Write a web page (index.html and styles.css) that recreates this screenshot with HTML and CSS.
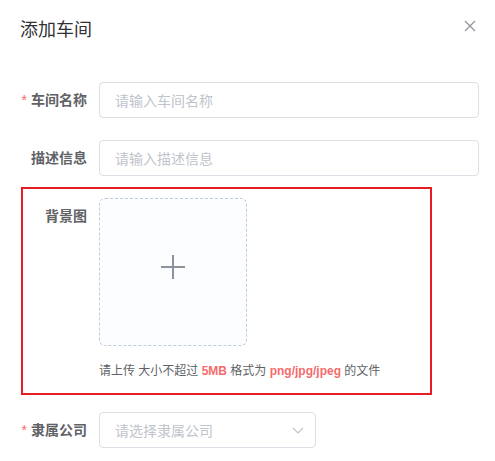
FILE: index.html
```html
<!DOCTYPE html>
<html lang="zh">
<head>
<meta charset="utf-8">
<link rel="stylesheet" href="styles.css">
</head>
<body>
<div class="dialog">
  <div class="header">
    <span class="title">添加车间</span>
    <span class="close" aria-label="关闭">
      <svg width="12" height="12" viewBox="0 0 12 12"><path d="M1 1 L11 11 M11 1 L1 11" stroke="#909399" stroke-width="1.2" fill="none"/></svg>
    </span>
  </div>
  <div class="form">
    <div class="item">
      <label class="label"><span class="req">*</span>车间名称</label>
      <div class="input wide"><span class="ph">请输入车间名称</span></div>
    </div>
    <div class="item">
      <label class="label">描述信息</label>
      <div class="input wide"><span class="ph">请输入描述信息</span></div>
    </div>
    <div class="mark">
      <div class="item upload-item">
        <label class="label short">背景图</label>
        <div class="upload-col">
          <div class="uploader">
            <svg width="24" height="24" viewBox="0 0 24 24"><path d="M12 0 V24 M0 12 H24" stroke="#8c939d" stroke-width="2" fill="none"/></svg>
          </div>
          <div class="tip">请上传 大小不超过 <b class="hl">5MB</b> 格式为 <b class="hl">png/jpg/jpeg</b> 的文件</div>
        </div>
      </div>
    </div>
    <div class="item select-item">
      <label class="label"><span class="req">*</span>隶属公司</label>
      <div class="input select"><span class="ph">请选择隶属公司</span>
        <svg class="arrow" width="12" height="7" viewBox="0 0 12 7"><path d="M1 1 L6 6 L11 1" stroke="#c0c4cc" stroke-width="1.2" fill="none"/></svg>
      </div>
    </div>
  </div>
</div>
</body>
</html>
```

FILE: styles.css
```css
html, body {
  margin: 0;
  padding: 0;
  background: #ffffff;
}
body {
  font-family: "Liberation Sans", "Noto Sans CJK SC", sans-serif;
  color: #606266;
  font-size: 14px;
}
.dialog {
  width: 495px;
}
.header {
  display: flex;
  justify-content: space-between;
  align-items: center;
  padding: 18px 19px 0 20px;
  height: 24px;
}
.title {
  font-size: 18px;
  line-height: 24px;
  color: #303133;
}
.close {
  display: flex;
  width: 12px;
  height: 12px;
  margin-top: -8px;
}
.form {
  padding: 40px 16px 0 19px;
}
.item {
  display: flex;
  align-items: flex-start;
  margin-bottom: 22px;
}
.label {
  width: 80px;
  box-sizing: border-box;
  padding-right: 12px;
  text-align: right;
  line-height: 36px;
  font-weight: bold;
  color: #606266;
  flex-shrink: 0;
}
.label.short {
  width: 76px;
}
.req {
  color: #f56c6c;
  font-weight: normal;
  margin-right: 4px;
}
.input {
  height: 36px;
  box-sizing: border-box;
  border: 1px solid #dcdfe6;
  border-radius: 4px;
  padding: 0 15px;
  display: flex;
  align-items: center;
}
.input.wide {
  width: 380px;
}
.ph {
  color: #c0c4cc;
}
.mark {
  margin: -11px 0 0 2px;
  width: 407px;
  border: 2px solid #e81c24;
  padding: 9px 0 12px 0;
}
.upload-item {
  margin-bottom: 0;
}
.upload-col {
  display: flex;
  flex-direction: column;
}
.uploader {
  width: 148px;
  height: 148px;
  box-sizing: border-box;
  border: 1px dashed #c0ccda;
  border-radius: 6px;
  background: #fbfdff;
  display: flex;
  align-items: center;
  justify-content: center;
}
.uploader svg {
  margin-top: -10px;
}
.tip {
  margin-top: 15px;
  font-size: 12px;
  line-height: 20px;
  color: #606266;
  white-space: nowrap;
}
.hl {
  color: #f56c6c;
}
.select-item {
  margin-top: 17px;
}
.input.select {
  width: 217px;
  justify-content: space-between;
  padding-right: 11px;
}
.arrow {
  display: block;
}
```
